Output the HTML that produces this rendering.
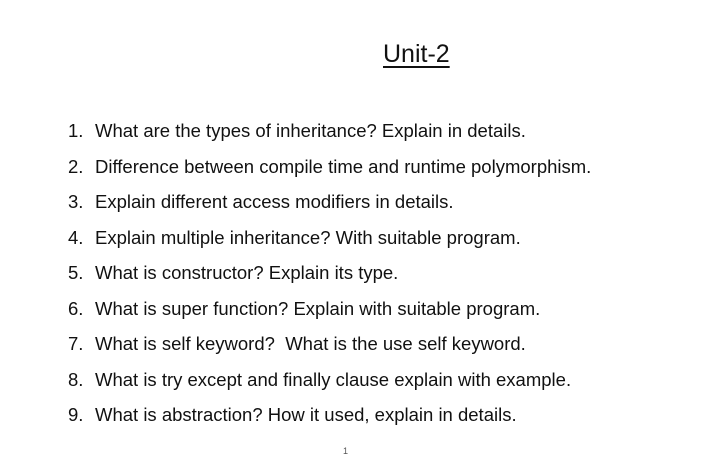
<!DOCTYPE html>
<html><head><style>
body{margin:0;width:705px;height:468px;background:#fff;font-family:"Liberation Sans",sans-serif;color:#111;position:relative;overflow:hidden}
.t{position:absolute;left:383px;top:40px;font-size:25px;text-decoration:underline;text-underline-offset:4px;text-decoration-thickness:2px}
.r{position:absolute;left:0;font-size:18.5px;white-space:nowrap}
.n{position:absolute;left:68px}
.x{position:absolute;left:95px}
.p{position:absolute;left:343px;top:446px;font-size:9px;color:#555}
</style></head><body>
<div class="t">Unit-2</div>
<div class="r" style="top:120px"><span class="n">1.</span><span class="x">What are the types of inheritance? Explain in details.</span></div>
<div class="r" style="top:156px"><span class="n">2.</span><span class="x">Difference between compile time and runtime polymorphism.</span></div>
<div class="r" style="top:191px"><span class="n">3.</span><span class="x">Explain different access modifiers in details.</span></div>
<div class="r" style="top:227px"><span class="n">4.</span><span class="x">Explain multiple inheritance? With suitable program.</span></div>
<div class="r" style="top:262px"><span class="n">5.</span><span class="x">What is constructor? Explain its type.</span></div>
<div class="r" style="top:298px"><span class="n">6.</span><span class="x">What is super function? Explain with suitable program.</span></div>
<div class="r" style="top:333px"><span class="n">7.</span><span class="x">What is self keyword?&nbsp; What is the use self keyword.</span></div>
<div class="r" style="top:369px"><span class="n">8.</span><span class="x">What is try except and finally clause explain with example.</span></div>
<div class="r" style="top:404px"><span class="n">9.</span><span class="x">What is abstraction? How it used, explain in details.</span></div>
<div class="p">1</div>
</body></html>
